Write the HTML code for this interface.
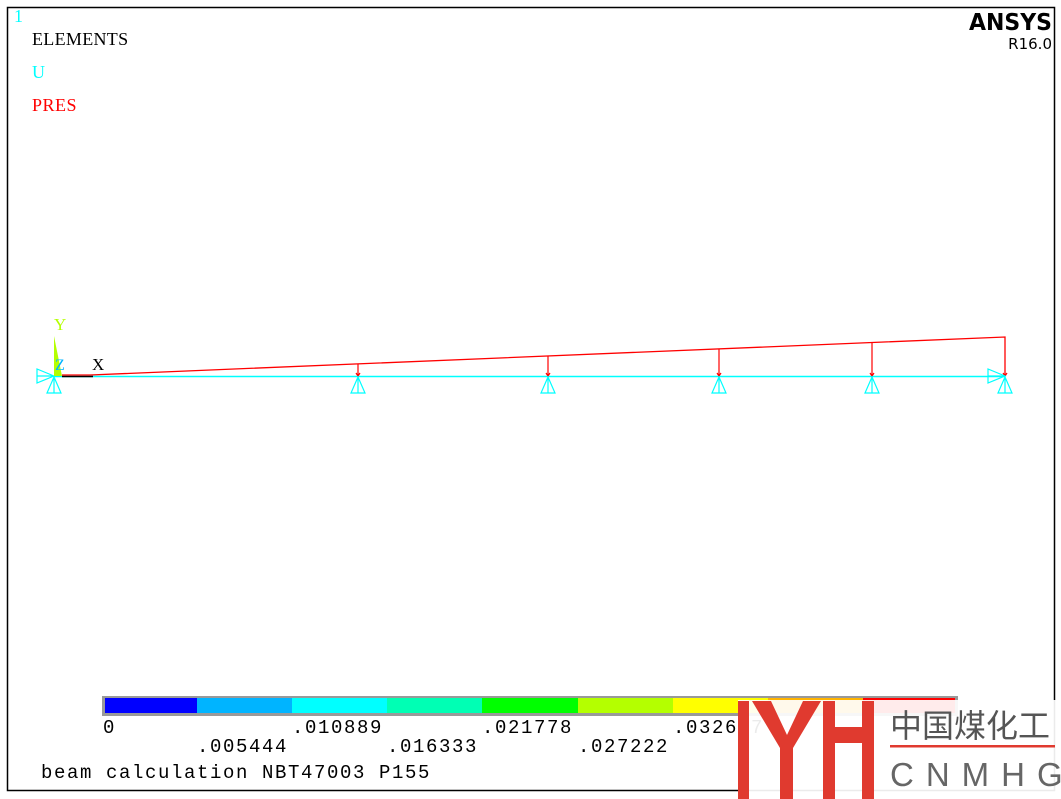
<!DOCTYPE html>
<html><head><meta charset="utf-8"><style>
body{margin:0;width:1061px;height:799px;background:#fff;overflow:hidden;position:relative}
svg{position:absolute;left:0;top:0}
</style></head><body>
<svg width="1061" height="799" xmlns="http://www.w3.org/2000/svg" font-family="Liberation Mono, monospace">
<rect x="7.5" y="7.5" width="1047" height="783" fill="none" stroke="#000" stroke-width="1.5"/>
<text x="14" y="22" fill="#00ffff" font-size="18" font-family="Liberation Serif, serif">1</text>
<text x="32" y="45" fill="#000" font-size="18" letter-spacing="0.3" font-family="Liberation Serif, serif">ELEMENTS</text>
<text x="32" y="78" fill="#00ffff" font-size="18" font-family="Liberation Serif, serif">U</text>
<text x="32" y="111" fill="#ff0000" font-size="18" letter-spacing="0.5" font-family="Liberation Serif, serif">PRES</text>
<text x="1052" y="30" text-anchor="end" font-family="DejaVu Sans, sans-serif" font-weight="bold" font-size="23" textLength="83" lengthAdjust="spacingAndGlyphs">ANSYS</text>
<text x="1052" y="49" text-anchor="end" font-family="DejaVu Sans, sans-serif" font-size="15">R16.0</text>
<!-- beam -->
<line x1="54" y1="376.5" x2="1005" y2="376.5" stroke="#00ffff" stroke-width="1.5"/>
<line x1="62" y1="376.5" x2="93" y2="376.5" stroke="#000" stroke-width="1.5"/>
<polyline points="62,375 90,375 1005,337 1005,376" fill="none" stroke="#ff0000" stroke-width="1.3"/>
<g stroke="#ff0000" stroke-width="1.2" fill="none">
<line x1="358" y1="364" x2="358" y2="376"/><path d="M356,373 L358,376 L360,373"/>
<line x1="548" y1="356" x2="548" y2="376"/><path d="M546,373 L548,376 L550,373"/>
<line x1="719" y1="349" x2="719" y2="376"/><path d="M717,373 L719,376 L721,373"/>
<line x1="872" y1="343" x2="872" y2="376"/><path d="M870,373 L872,376 L874,373"/>
<path d="M1003,373 L1005,376 L1007,373"/>
</g>
<g stroke="#00ffff" stroke-width="1.2" fill="none">
<path d="M54,377 L47,393 L61,393 Z M54,377 L54,393"/>
<path d="M358,377 L351,393 L365,393 Z M358,377 L358,393"/>
<path d="M548,377 L541,393 L555,393 Z M548,377 L548,393"/>
<path d="M719,377 L712,393 L726,393 Z M719,377 L719,393"/>
<path d="M872,377 L865,393 L879,393 Z M872,377 L872,393"/>
<path d="M1005,377 L998,393 L1012,393 Z M1005,377 L1005,393"/>
<path d="M54,376 L37,369 L37,383 Z M37,376 L54,376"/>
<path d="M1005,376 L988,369 L988,383 Z M988,376 L1005,376"/>
</g>
<polygon points="54,336 54,376 62,376" fill="#b4ff00"/>
<text x="54" y="330" fill="#b4ff00" font-size="17" font-family="Liberation Serif, serif">Y</text>
<text x="55" y="370" fill="#00b4ff" font-size="16" font-family="Liberation Serif, serif">Z</text>
<text x="92" y="370" fill="#000" font-size="17" font-family="Liberation Serif, serif">X</text>
<!-- color bar -->
<rect x="102" y="696" width="856" height="20" fill="#999"/>
<g>
<rect x="105" y="698" width="92" height="15" fill="#0000ff"/>
<rect x="197" y="698" width="95" height="15" fill="#00b4ff"/>
<rect x="292" y="698" width="95" height="15" fill="#00ffff"/>
<rect x="387" y="698" width="95" height="15" fill="#00ffb4"/>
<rect x="482" y="698" width="96" height="15" fill="#00ff00"/>
<rect x="578" y="698" width="95" height="15" fill="#b4ff00"/>
<rect x="673" y="698" width="95" height="15" fill="#ffff00"/>
<rect x="768" y="698" width="95" height="15" fill="#ffb400"/>
<rect x="863" y="698" width="92" height="15" fill="#ff0000"/>
</g>
<g font-size="19" fill="#000" letter-spacing="1.6">
<text x="103" y="733">0</text>
<text x="292" y="733">.010889</text>
<text x="482" y="733">.021778</text>
<text x="673" y="733">.032667</text>
<text x="197" y="752">.005444</text>
<text x="387" y="752">.016333</text>
<text x="578" y="752">.027222</text>
<text x="41" y="778" letter-spacing="1.6">beam calculation NBT47003 P155</text>
</g>
<!-- watermark -->
<rect x="738" y="700" width="323" height="99" fill="#fff" opacity="0.92"/>
<g fill="#e03a2f">
<rect x="738" y="701" width="11" height="98"/>
<polygon points="752,701 771,701 787,735 803,701 821,701 793,748 793,799 780,799 780,748"/>
<rect x="823" y="701" width="12" height="98"/>
<rect x="835" y="727" width="28" height="16"/>
<rect x="862" y="701" width="12" height="98"/>
</g>
<rect x="890" y="745" width="165" height="2.5" fill="#e03a2f"/>
<text x="890" y="737" font-family="Liberation Sans, Noto Sans CJK SC, sans-serif" font-size="32" fill="#555">中国煤化工</text>
<text x="890" y="786" font-family="Liberation Sans, sans-serif" font-size="33" fill="#666" letter-spacing="12">CNMHG</text>
</svg>
</body></html>
